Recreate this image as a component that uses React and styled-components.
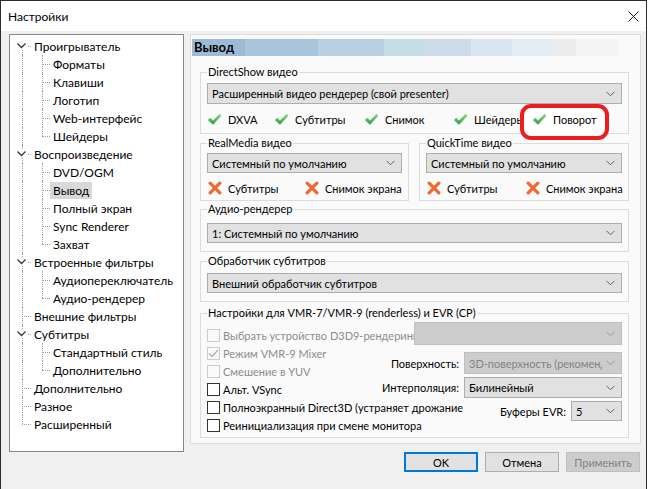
import React from "react"
import styled, { createGlobalStyle, css } from "styled-components"

const GlobalStyle = createGlobalStyle`
  html, body {
    margin: 0;
    padding: 0;
    background: #ffffff;
  }
  body {
    font-family: Lato, "Noto Sans", "Liberation Sans", sans-serif;
    font-size: 12px;
    color: #000;
  }
  *, *::before, *::after {
    box-sizing: border-box;
  }
`

const Window = styled.div`
  width: 647px;
  height: 489px;
  border: 1px solid #2b2b2b;
  border-bottom: none;
  background: #f0f0f0;
  display: flex;
  flex-direction: column;
`

const TitleBar = styled.div`
  height: 30px;
  flex: none;
  background: #ffffff;
  display: flex;
  align-items: center;
  justify-content: space-between;
  padding: 0 7px 0 7px;
`

const Body = styled.div`
  display: grid;
  grid-template-columns: 175px 451px;
  column-gap: 6px;
  padding: 3px 0 0 8px;
`

/* ---------- tree ---------- */

const Tree = styled.nav`
  height: 418px;
  background: #ffffff;
  border: 1px solid #828790;
  padding-top: 2px;
`

const dotted = "1px dotted #a0a0a0"

const TreeRow = styled.div`
  position: relative;
  height: 18px;
  display: flex;
  align-items: center;
  padding-left: ${p => (p.$level === 0 ? 21 : 40)}px;

  &::before {
    content: "";
    position: absolute;
    left: 12px;
    border-left: ${dotted};
    ${p =>
      p.$level === 0
        ? css`
            top: ${p.$first ? 9 : 0}px;
            bottom: ${p.$last ? 9 : 0}px;
          `
        : css`
            top: 0;
            bottom: 0;
          `}
  }

  ${p =>
    p.$level === 1 &&
    css`
      &::after {
        content: "";
        position: absolute;
        left: 32px;
        top: 0;
        bottom: ${p.$last ? 9 : 0}px;
        border-left: ${dotted};
      }
    `}
`

const Branch = styled.span`
  position: absolute;
  top: 9px;
  left: ${p => (p.$level === 0 ? 12 : 32)}px;
  width: ${p => (p.$level === 0 ? 9 : 8)}px;
  border-top: ${dotted};
`

const Expander = styled.svg`
  position: absolute;
  left: 6px;
  top: 5px;
  background: #ffffff;
`

const TreeLabel = styled.span`
  position: relative;
  height: 17px;
  line-height: 17px;
  padding: 0 3px;
  white-space: nowrap;
  background: ${p => (p.$selected ? "#d9d9d9" : "transparent")};
`

/* ---------- right side ---------- */

const RightColumn = styled.div`
  display: flex;
  flex-direction: column;
  font-size: 11px;
`

const Panel = styled.section`
  height: 410px;
  border: 1px solid #dcdcdc;
  background: #fafafa;
  padding: 4px 0 0 1px;
  display: flex;
  flex-direction: column;
`

const PageHeader = styled.div`
  width: 426px;
  height: 17px;
  line-height: 17px;
  padding-left: 2px;
  font-size: 13px;
  font-weight: bold;
  background: linear-gradient(
    to right,
    #9dbbd6 0 53px,
    #aac4dc 53px 126px,
    #b9cfe2 126px 192px,
    #c5dde4 192px 231px,
    #cbdbe9 231px 279px,
    #d9e5f0 279px 320px,
    #e3ebf3 320px 361px,
    #ececec 361px 384px,
    #f4f4f4 384px
  );
`

const Groups = styled.div`
  display: flex;
  flex-direction: column;
  padding-left: 8px;
`

const Group = styled.fieldset`
  margin: ${p => p.$mt}px 0 0 0;
  padding: ${p => p.$pt}px 6px 0 6px;
  width: ${p => p.$w || 429}px;
  height: ${p => p.$h}px;
  border: 1px solid #dcdcdc;
  min-width: 0;
`

const GroupTitle = styled.legend`
  padding: 0 1px;
  height: 16px;
  line-height: 16px;
`

const GroupRow = styled.div`
  display: flex;
  gap: 10px;
  margin-top: ${p => p.$mt}px;
`

const Combo = styled.div`
  display: flex;
  align-items: center;
  gap: 4px;
  height: ${p => p.$h || 21}px;
  width: ${p => (p.$w ? `${p.$w}px` : "100%")};
  flex: none;
  background: ${p => (p.$disabled ? "#cccccc" : "#e1e1e1")};
  border: 1px solid ${p => (p.$disabled ? "#bfbfbf" : "#adadad")};
  padding: 0 6px 0 4px;
  color: ${p => (p.$disabled ? "#838383" : "#000")};
`

const ComboText = styled.span`
  flex: 1;
  overflow: hidden;
  white-space: nowrap;
`

const StatusRow = styled.div`
  display: grid;
  grid-template-columns: ${p => p.$cols};
  grid-template-rows: 16px;
  height: 16px;
  margin-top: 7px;
  padding-left: ${p => p.$pl || 0}px;
`

const Status = styled.span`
  display: flex;
  align-items: center;
  gap: 6px;
  white-space: nowrap;
  ${p =>
    p.$marked &&
    css`
      position: relative;
      z-index: 1;
      &::before {
        content: "";
        position: absolute;
        z-index: -1;
        left: -12px;
        top: -7px;
        width: 89px;
        height: 36px;
        border: 4px solid #ee1c1c;
        border-radius: 11px;
        background: #ffffff;
      }
    `}
`

const VmrBody = styled.div`
  display: grid;
`

const VmrLeft = styled.div`
  grid-area: 1 / 1;
  display: flex;
  flex-direction: column;
  padding-top: 5px;
`

const VmrRight = styled.div`
  grid-area: 1 / 1;
  display: flex;
  flex-direction: column;
  align-items: flex-end;
  padding-top: 1px;
`

const CheckRow = styled.label`
  display: flex;
  align-items: center;
  gap: 3px;
  height: 18px;
  max-width: 256px;
  overflow: hidden;
  white-space: nowrap;
  color: ${p => (p.$disabled ? "#8c8c8c" : "#000")};
`

const Box = styled.span`
  flex: none;
  width: 13px;
  height: 13px;
  border: 1px solid ${p => (p.$disabled ? "#cccccc" : "#333333")};
  background: ${p => (p.$disabled ? "#fafafa" : "#ffffff")};
  display: flex;
  align-items: center;
  justify-content: center;
`

const FieldRow = styled.div`
  display: flex;
  align-items: center;
  gap: 5px;
  margin-top: ${p => p.$mt}px;
  white-space: nowrap;
`

const Actions = styled.div`
  display: flex;
  justify-content: flex-end;
  gap: 7px;
  margin-top: 8px;
  padding-right: 1px;
`

const Button = styled.button`
  width: 74px;
  height: 20px;
  padding: 0;
  font: inherit;
  background: ${p => (p.$disabled ? "#cccccc" : "#e1e1e1")};
  color: ${p => (p.$disabled ? "#838383" : "#000")};
  border: ${p => (p.$default ? "2px solid #0078d7" : `1px solid ${p.$disabled ? "#bfbfbf" : "#adadad"}`)};
`

/* ---------- drawings ---------- */

const Chevron = ({ color = "#606060" }) => (
  <svg width="9" height="6" viewBox="0 0 9 6">
    <polyline points="0.5,0.8 4.5,4.8 8.5,0.8" fill="none" stroke={color} strokeWidth="1" />
  </svg>
)

const CloseIcon = () => (
  <svg width="11" height="11" viewBox="0 0 11 11">
    <path d="M0.5 0.5 L10.5 10.5 M10.5 0.5 L0.5 10.5" stroke="#1a1a1a" strokeWidth="1" />
  </svg>
)

const CheckIcon = () => (
  <svg width="15" height="13" viewBox="0 0 15 13">
    <defs>
      <linearGradient id="okGreen" x1="0" y1="0" x2="0" y2="1">
        <stop offset="0" stopColor="#8fdb8a" />
        <stop offset="1" stopColor="#2c9a43" />
      </linearGradient>
    </defs>
    <path d="M0.8 7 L3.4 4.7 L6 7.4 L12.6 0.8 L14.4 2.8 L6 11.8 Z" fill="url(#okGreen)" />
  </svg>
)

const CrossIcon = () => (
  <svg width="14" height="14" viewBox="0 0 14 14">
    <path d="M2.2 2.2 L11.8 11.8 M11.8 2.2 L2.2 11.8" stroke="#ef6a33" strokeWidth="3.3" strokeLinecap="round" />
  </svg>
)

const Tick = ({ color }) => (
  <svg width="11" height="9" viewBox="0 0 11 9">
    <polyline points="1,4.5 4,7.5 10,1" fill="none" stroke={color} strokeWidth="1.2" />
  </svg>
)

/* ---------- data ---------- */

const tree = [
  { label: "Проигрыватель", level: 0, expander: true, first: true },
  { label: "Форматы", level: 1 },
  { label: "Клавиши", level: 1 },
  { label: "Логотип", level: 1 },
  { label: "Web-интерфейс", level: 1 },
  { label: "Шейдеры", level: 1, last: true },
  { label: "Воспроизведение", level: 0, expander: true },
  { label: "DVD/OGM", level: 1 },
  { label: "Вывод", level: 1, selected: true },
  { label: "Полный экран", level: 1 },
  { label: "Sync Renderer", level: 1 },
  { label: "Захват", level: 1, last: true },
  { label: "Встроенные фильтры", level: 0, expander: true },
  { label: "Аудиопереключатель", level: 1 },
  { label: "Аудио-рендерер", level: 1, last: true },
  { label: "Внешние фильтры", level: 0 },
  { label: "Субтитры", level: 0, expander: true },
  { label: "Стандартный стиль", level: 1 },
  { label: "Дополнительно", level: 1, last: true },
  { label: "Дополнительно", level: 0 },
  { label: "Разное", level: 0 },
  { label: "Расширенный", level: 0, last: true },
]

const directShow = ["DXVA", "Субтитры", "Снимок", "Шейдеры", "Поворот"]

const vmrChecks = [
  { label: "Выбрать устройство D3D9-рендеринга", disabled: true },
  { label: "Режим VMR-9 Mixer", disabled: true, checked: true },
  { label: "Смешение в YUV", disabled: true },
  { label: "Альт. VSync" },
  { label: "Полноэкранный Direct3D (устраняет дрожание)" },
  { label: "Реинициализация при смене монитора" },
]

const Select = ({ children, ...rest }) => (
  <Combo {...rest}>
    <ComboText>{children}</ComboText>
    <Chevron color={rest.$disabled ? "#9a9a9a" : "#606060"} />
  </Combo>
)

const Unsupported = ({ children }) => (
  <Status>
    <CrossIcon />
    {children}
  </Status>
)

export default function App() {
  return (
    <>
      <GlobalStyle />
      <Window>
        <TitleBar>
          <span>Настройки</span>
          <CloseIcon />
        </TitleBar>
        <Body>
          <Tree>
            {tree.map((node, i) => (
              <TreeRow key={i} $level={node.level} $first={node.first} $last={node.last}>
                <Branch $level={node.level} />
                {node.expander && (
                  <Expander width="11" height="8" viewBox="0 0 11 8">
                    <polyline points="1.5,1.5 5.5,5.5 9.5,1.5" fill="none" stroke="#3c3c3c" strokeWidth="1.4" />
                  </Expander>
                )}
                <TreeLabel $selected={node.selected}>{node.label}</TreeLabel>
              </TreeRow>
            ))}
          </Tree>

          <RightColumn>
            <Panel>
              <PageHeader>Вывод</PageHeader>
              <Groups>
                <Group $mt={8} $pt={3} $h={70}>
                  <GroupTitle>DirectShow видео</GroupTitle>
                  <Select>Расширенный видео рендерер (свой presenter)</Select>
                  <StatusRow $cols="67px 90px 89px 79px 1fr">
                    {directShow.map(name => (
                      <Status key={name} $marked={name === "Поворот"}>
                        <CheckIcon />
                        {name}
                      </Status>
                    ))}
                  </StatusRow>
                </Group>

                <GroupRow $mt={1}>
                  <Group $mt={0} $pt={2} $h={66} $w={209}>
                    <GroupTitle>RealMedia видео</GroupTitle>
                    <Select $h={20}>Системный по умолчанию</Select>
                    <StatusRow $cols="97px 1fr" $pl={1}>
                      <Unsupported>Субтитры</Unsupported>
                      <Unsupported>Снимок экрана</Unsupported>
                    </StatusRow>
                  </Group>
                  <Group $mt={0} $pt={2} $h={66} $w={210}>
                    <GroupTitle>QuickTime видео</GroupTitle>
                    <Select $h={20}>Системный по умолчанию</Select>
                    <StatusRow $cols="99px 1fr" $pl={1}>
                      <Unsupported>Субтитры</Unsupported>
                      <Unsupported>Снимок экрана</Unsupported>
                    </StatusRow>
                  </Group>
                </GroupRow>

                <Group $mt={0} $pt={6} $h={51}>
                  <GroupTitle>Аудио-рендерер</GroupTitle>
                  <Select $h={20}>1: Системный по умолчанию</Select>
                </Group>

                <Group $mt={1} $pt={4} $h={49}>
                  <GroupTitle>Обработчик субтитров</GroupTitle>
                  <Select $h={20}>Внешний обработчик субтитров</Select>
                </Group>

                <Group $mt={3} $pt={0} $h={133}>
                  <GroupTitle>Настройки для VMR-7/VMR-9 (renderless) и EVR (CP)</GroupTitle>
                  <VmrBody>
                    <VmrLeft>
                      {vmrChecks.map(item => (
                        <CheckRow key={item.label} $disabled={item.disabled}>
                          <Box $disabled={item.disabled}>
                            {item.checked && <Tick color="#a8a8a8" />}
                          </Box>
                          {item.label}
                        </CheckRow>
                      ))}
                    </VmrLeft>
                    <VmrRight>
                      <Select $disabled $h={23} $w={208} />
                      <FieldRow $mt={7}>
                        Поверхность:
                        <Select $disabled $h={22} $w={158}>3D-поверхность (рекомендуется)</Select>
                      </FieldRow>
                      <FieldRow $mt={3}>
                        Интерполяция:
                        <Select $h={21} $w={158}>Билинейный</Select>
                      </FieldRow>
                      <FieldRow $mt={3}>
                        Буферы EVR:
                        <Select $h={20} $w={51}>5</Select>
                      </FieldRow>
                    </VmrRight>
                  </VmrBody>
                </Group>
              </Groups>
            </Panel>
            <Actions>
              <Button $default>OK</Button>
              <Button>Отмена</Button>
              <Button $disabled disabled>
                Применить
              </Button>
            </Actions>
          </RightColumn>
        </Body>
      </Window>
    </>
  )
}
